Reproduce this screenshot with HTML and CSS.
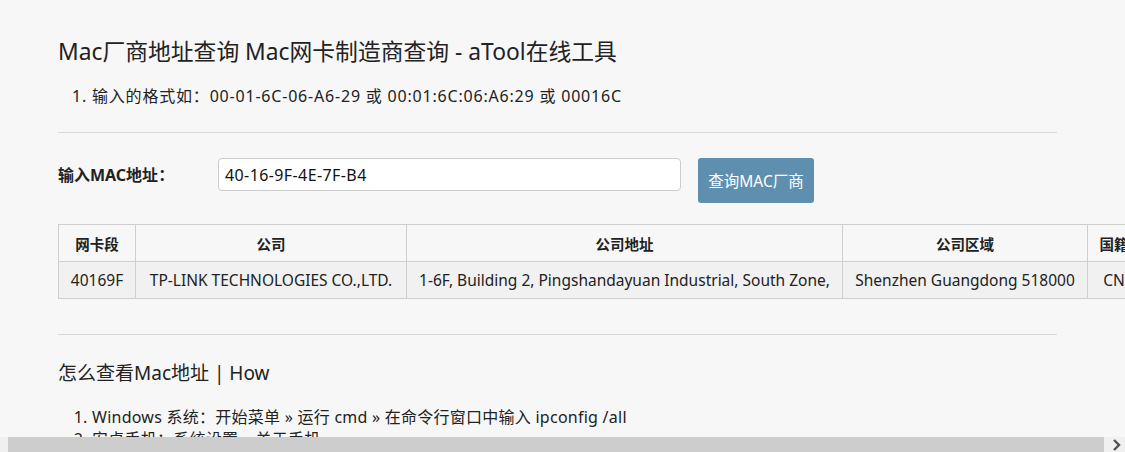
FILE: index.html
```html
<!DOCTYPE html>
<html lang="zh-CN">
<head>
<meta charset="utf-8">
<title>Mac厂商地址查询</title>
<link rel="stylesheet" href="styles.css">
</head>
<body>
<div class="page">
  <div class="container">
    <h1 class="title">Mac厂商地址查询 Mac网卡制造商查询 - aTool在线工具</h1>
    <ol class="list tips">
      <li>输入的格式如<span class="colon">：</span>00-01-6C-06-A6-29 或 00:01:6C:06:A6:29 或 00016C</li>
    </ol>
    <hr class="rule">
    <form class="query">
      <label class="query-label">输入MAC地址<span class="colon">：</span></label>
      <input class="query-input" type="text" value="40-16-9F-4E-7F-B4">
      <button class="query-btn" type="button">查询MAC厂商</button>
    </form>
    <table class="result">
      <colgroup>
        <col class="c1"><col class="c2"><col class="c3"><col class="c4"><col class="c5">
      </colgroup>
      <thead>
        <tr><th>网卡段</th><th>公司</th><th>公司地址</th><th>公司区域</th><th>国籍</th></tr>
      </thead>
      <tbody>
        <tr><td>40169F</td><td>TP-LINK TECHNOLOGIES CO.,LTD.</td><td>1-6F, Building 2, Pingshandayuan Industrial, South Zone,</td><td>Shenzhen Guangdong 518000</td><td>CN</td></tr>
      </tbody>
    </table>
    <hr class="rule rule-2">
    <h3 class="subtitle">怎么查看Mac地址 | How</h3>
    <ol class="list how">
      <li>Windows 系统<span class="colon">：</span>开始菜单 » 运行 cmd » 在命令行窗口中输入 ipconfig /all</li>
      <li>安卓手机<span class="colon">：</span>系统设置 » 关于手机</li>
      <li>苹果手机<span class="colon">：</span>设置 » 通用 » 关于本机</li>
    </ol>
  </div>
</div>
<div class="hscroll">
  <div class="hscroll-left"></div>
  <div class="hscroll-thumb"></div>
  <div class="hscroll-right"><svg width="10" height="12" viewBox="0 0 10 12"><path d="M2 1 L7 6 L2 11" fill="none" stroke="#505050" stroke-width="2.4"/></svg></div>
</div>
</body>
</html>
```

FILE: styles.css
```css
html, body {
  margin: 0;
  padding: 0;
  height: 452px;
  overflow: hidden;
  background: #f7f7f7;
}
body {
  font-family: "Noto Sans", "Noto Sans CJK SC", sans-serif;
  color: #222;
}
.page {
  width: 1200px;
}
.container {
  width: 999px;
  padding-left: 58px;
  padding-top: 34px;
}
.colon {
  font-family: "Noto Sans CJK TC", "Noto Sans CJK SC", sans-serif;
}
.title {
  margin: 0;
  font-size: 22.8px;
  font-weight: normal;
  line-height: 36px;
  color: #222;
}
.list {
  margin: 0;
  padding-left: 34px;
  font-size: 16px;
  line-height: 21px;
}
.tips {
  margin-top: 15px;
  letter-spacing: 0.8px;
}
.rule {
  margin: 25px 0 0 0;
  border: 0;
  border-top: 1px solid #d8d8d8;
  height: 0;
}
.query {
  display: flex;
  align-items: flex-start;
  margin-top: 25px;
}
.query-label {
  width: 160px;
  font-size: 16px;
  font-weight: bold;
  line-height: 33px;
}
.query-input {
  box-sizing: border-box;
  width: 463px;
  height: 33px;
  border: 1px solid #ccc;
  border-radius: 4px;
  background: #fff;
  padding: 0 6px;
  font-family: "Noto Sans", "Noto Sans CJK SC", sans-serif;
  font-size: 16px;
  letter-spacing: 0.4px;
  color: #111;
}
.query-btn {
  box-sizing: border-box;
  margin-left: 17px;
  width: 116px;
  height: 45px;
  border: 0;
  border-radius: 3px;
  background: #5f8fae;
  color: #fff;
  font-family: "Noto Sans", "Noto Sans CJK SC", sans-serif;
  font-size: 15.5px;
  padding: 0;
}
.result {
  margin-top: 21px;
  border-collapse: collapse;
  table-layout: fixed;
  width: 1082px;
  white-space: nowrap;
  font-size: 15.5px;
}
.result th, .result td {
  border: 1px solid #cfcfcf;
  height: 36px;
  padding: 0 8px;
  text-align: center;
  overflow: hidden;
}
.result th {
  font-size: 14.5px;
  font-weight: bold;
  background: #f7f7f7;
}
.result td {
  background: #f1f1f1;
}
.result .c1 { width: 77px; }
.result .c2 { width: 271px; }
.result .c3 { width: 436px; }
.result .c4 { width: 245px; }
.result .c5 { width: 53px; }
.rule-2 {
  margin-top: 35px;
}
.subtitle {
  margin: 23px 0 0 0;
  font-size: 19px;
  font-weight: normal;
  line-height: 30px;
}
.how {
  margin-top: 18px;
  letter-spacing: 0.25px;
}
.hscroll {
  position: fixed;
  left: 0;
  bottom: 0;
  width: 1125px;
  height: 15px;
  display: flex;
  background: #f0f0f0;
}
.hscroll-left {
  width: 8px;
}
.hscroll-thumb {
  width: 1096px;
  background: #cdcdcd;
}
.hscroll-right {
  flex: 1;
  display: flex;
  align-items: center;
  justify-content: flex-end;
  padding-right: 3px;
}
```
